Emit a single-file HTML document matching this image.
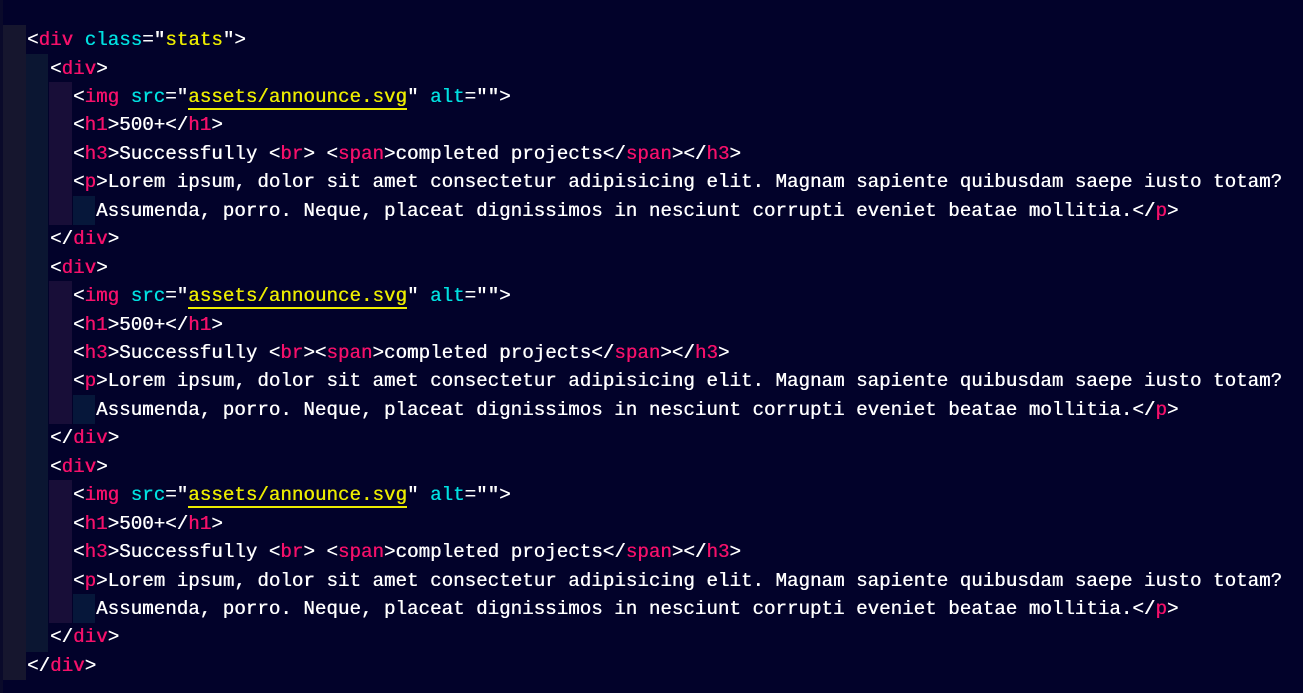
<!DOCTYPE html>
<html><head><meta charset="utf-8"><style>
html,body{margin:0;padding:0;}
body{width:1303px;height:693px;background:#02022a;overflow:hidden;position:relative;font-family:"Liberation Mono",monospace;font-size:19.2px;color:#ffffff;}
.g{position:absolute;}
.l{position:absolute;left:0;white-space:pre;height:28.45px;line-height:28.45px;text-shadow:0.4px 0 0 currentColor;}
.t{color:#f5106a}.a{color:#00e0e0}.s{color:#ecec00}
.u{color:#ecec00;border-bottom:2px solid #ecec00;}
</style></head><body>
<div class="g" style="left:0;top:0;width:3px;height:693px;background:#0a0a2a"></div>
<div class="g" style="left:3px;top:25px;width:23px;height:655px;background:#16162e"></div>
<div class="g" style="left:26px;top:54px;width:22px;height:598px;background:#0b1632"></div>
<div class="g" style="left:49px;top:82px;width:23px;height:143px;background:#180e38"></div>
<div class="g" style="left:73px;top:196px;width:22px;height:29px;background:#06173a"></div>
<div class="g" style="left:49px;top:281px;width:23px;height:143px;background:#180e38"></div>
<div class="g" style="left:73px;top:395px;width:22px;height:29px;background:#06173a"></div>
<div class="g" style="left:49px;top:480px;width:23px;height:143px;background:#180e38"></div>
<div class="g" style="left:73px;top:594px;width:22px;height:29px;background:#06173a"></div>

<div class="l" style="top:26px;left:27px">&lt;<span class="t">div</span> <span class="a">class</span>="<span class="s">stats</span>"&gt;</div>

<div class="l" style="top:54.5px;left:50px">&lt;<span class="t">div</span>&gt;</div>
<div class="l" style="top:83px;left:73px">&lt;<span class="t">img</span> <span class="a">src</span>="<span class="u">assets/announce.svg</span>" <span class="a">alt</span>=""&gt;</div>
<div class="l" style="top:111.4px;left:73px">&lt;<span class="t">h1</span>&gt;500+&lt;/<span class="t">h1</span>&gt;</div>
<div class="l" style="top:139.8px;left:73px">&lt;<span class="t">h3</span>&gt;Successfully &lt;<span class="t">br</span>&gt; &lt;<span class="t">span</span>&gt;completed projects&lt;/<span class="t">span</span>&gt;&lt;/<span class="t">h3</span>&gt;</div>
<div class="l" style="top:168.3px;left:73px">&lt;<span class="t">p</span>&gt;Lorem ipsum, dolor sit amet consectetur adipisicing elit. Magnam sapiente quibusdam saepe iusto totam?</div>
<div class="l" style="top:196.7px;left:96px">Assumenda, porro. Neque, placeat dignissimos in nesciunt corrupti eveniet beatae mollitia.&lt;/<span class="t">p</span>&gt;</div>
<div class="l" style="top:225.2px;left:50px">&lt;/<span class="t">div</span>&gt;</div>

<div class="l" style="top:253.6px;left:50px">&lt;<span class="t">div</span>&gt;</div>
<div class="l" style="top:282px;left:73px">&lt;<span class="t">img</span> <span class="a">src</span>="<span class="u">assets/announce.svg</span>" <span class="a">alt</span>=""&gt;</div>
<div class="l" style="top:310.5px;left:73px">&lt;<span class="t">h1</span>&gt;500+&lt;/<span class="t">h1</span>&gt;</div>
<div class="l" style="top:339px;left:73px">&lt;<span class="t">h3</span>&gt;Successfully &lt;<span class="t">br</span>&gt;&lt;<span class="t">span</span>&gt;completed projects&lt;/<span class="t">span</span>&gt;&lt;/<span class="t">h3</span>&gt;</div>
<div class="l" style="top:367.4px;left:73px">&lt;<span class="t">p</span>&gt;Lorem ipsum, dolor sit amet consectetur adipisicing elit. Magnam sapiente quibusdam saepe iusto totam?</div>
<div class="l" style="top:395.8px;left:96px">Assumenda, porro. Neque, placeat dignissimos in nesciunt corrupti eveniet beatae mollitia.&lt;/<span class="t">p</span>&gt;</div>
<div class="l" style="top:424.3px;left:50px">&lt;/<span class="t">div</span>&gt;</div>

<div class="l" style="top:452.7px;left:50px">&lt;<span class="t">div</span>&gt;</div>
<div class="l" style="top:481.2px;left:73px">&lt;<span class="t">img</span> <span class="a">src</span>="<span class="u">assets/announce.svg</span>" <span class="a">alt</span>=""&gt;</div>
<div class="l" style="top:509.6px;left:73px">&lt;<span class="t">h1</span>&gt;500+&lt;/<span class="t">h1</span>&gt;</div>
<div class="l" style="top:538px;left:73px">&lt;<span class="t">h3</span>&gt;Successfully &lt;<span class="t">br</span>&gt; &lt;<span class="t">span</span>&gt;completed projects&lt;/<span class="t">span</span>&gt;&lt;/<span class="t">h3</span>&gt;</div>
<div class="l" style="top:566.5px;left:73px">&lt;<span class="t">p</span>&gt;Lorem ipsum, dolor sit amet consectetur adipisicing elit. Magnam sapiente quibusdam saepe iusto totam?</div>
<div class="l" style="top:595px;left:96px">Assumenda, porro. Neque, placeat dignissimos in nesciunt corrupti eveniet beatae mollitia.&lt;/<span class="t">p</span>&gt;</div>
<div class="l" style="top:623.4px;left:50px">&lt;/<span class="t">div</span>&gt;</div>
<div class="l" style="top:651.8px;left:27px">&lt;/<span class="t">div</span>&gt;</div>
</body></html>
